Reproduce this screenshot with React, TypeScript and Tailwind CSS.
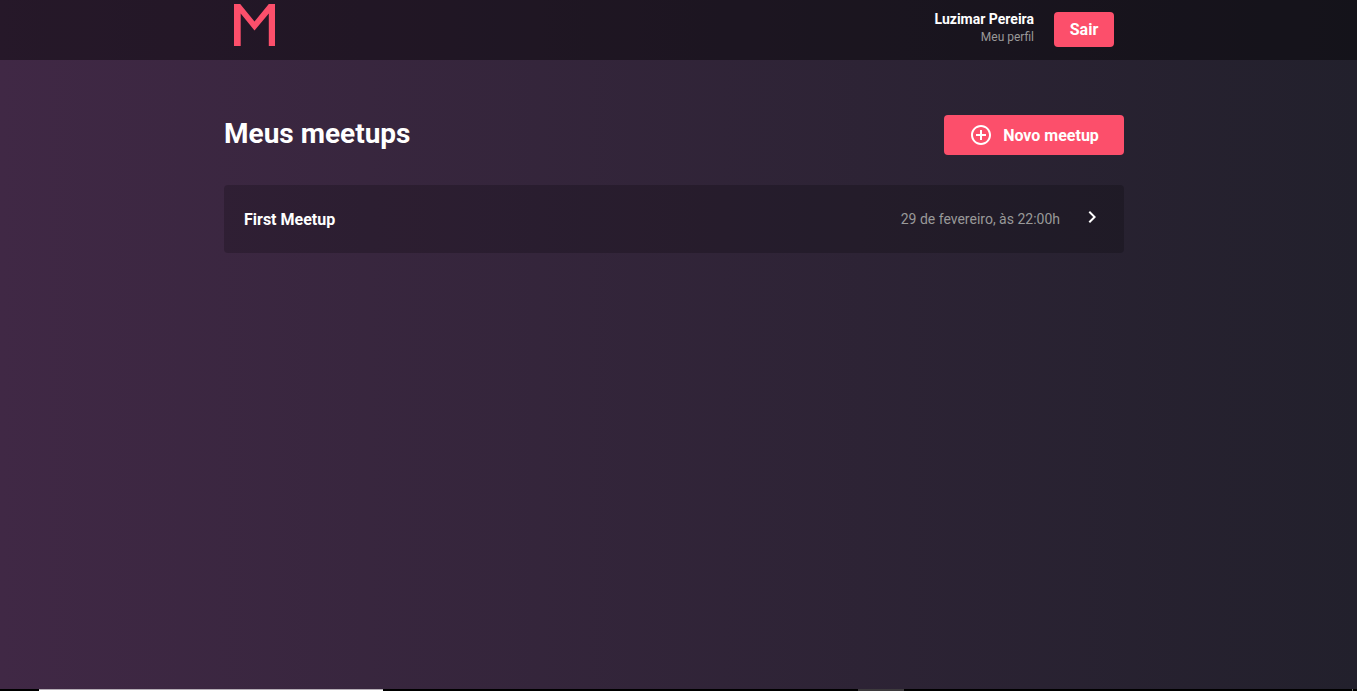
import React from 'react';
import { MdAddCircleOutline, MdChevronRight } from 'react-icons/md';

function Logo() {
  return (
    <svg width="41" height="42" viewBox="0 0 41 42" fill="#fc4f6b" aria-hidden="true">
      <path d="M0 42V0h6.2L20.5 17.6 34.8 0H41v42h-6.2V9.6L20.5 26.4 6.7 9.6V42z" />
    </svg>
  );
}

function Header() {
  return (
    <header className="h-[60px] bg-black/40 pr-[9px]">
      <div className="mx-auto flex h-[60px] w-[900px] justify-between px-[10px]">
        <div className="pt-1">
          <Logo />
        </div>
        <div className="flex">
          <div className="mr-5 pt-[10px] text-right">
            <strong className="block text-sm leading-[18px] font-bold text-white">Luzimar Pereira</strong>
            <a className="block text-xs leading-[18px] text-[#999]">Meu perfil</a>
          </div>
          <button className="mt-3 h-[35px] w-[60px] rounded-[4px] bg-[#fc4f6b] text-base font-bold text-white">
            Sair
          </button>
        </div>
      </div>
    </header>
  );
}

interface Meetup {
  title: string;
  date: string;
}

const meetups: Meetup[] = [{ title: 'First Meetup', date: '29 de fevereiro, às 22:00h' }];

function MeetupRow({ title, date }: Meetup) {
  return (
    <li className="flex h-[68px] items-center justify-between rounded-[4px] bg-black/20 pr-5 pl-5">
      <strong className="pt-0.5 text-base font-bold text-white">{title}</strong>
      <div className="flex items-center">
        <span className="text-sm text-[#999]">{date}</span>
        <MdChevronRight size={24} className="mb-[5px] ml-5 text-white" />
      </div>
    </li>
  );
}

export default function App() {
  return (
    <div className="flex h-[691px] flex-col overflow-hidden bg-linear-to-r from-[#402845] to-[#22202c] font-['Roboto',sans-serif]">
      <Header />
      <main className="flex-1 pt-[55px] pr-[9px]">
        <div className="mx-auto w-[900px]">
          <div className="mb-[30px] flex h-10 justify-between">
            <h1 className="text-[28px] leading-[37px] font-bold text-white">Meus meetups</h1>
            <button className="flex h-10 w-[180px] items-center justify-center rounded-[4px] bg-[#fc4f6b] text-base font-bold text-white">
              <MdAddCircleOutline size={24} className="mr-[10px]" />
              <span className="pt-0.5">Novo meetup</span>
            </button>
          </div>
          <ul>
            {meetups.map((m) => (
              <MeetupRow key={m.title} {...m} />
            ))}
          </ul>
        </div>
      </main>
      <div className="flex h-0.5 bg-black">
        <div className="ml-[39px] w-[344px] border-t border-[#b5aeb6] bg-white" />
        <div className="ml-[475px] w-[46px] bg-[#3d3a3d]" />
        <div className="ml-[448px] w-px bg-[#777]" />
      </div>
    </div>
  );
}
